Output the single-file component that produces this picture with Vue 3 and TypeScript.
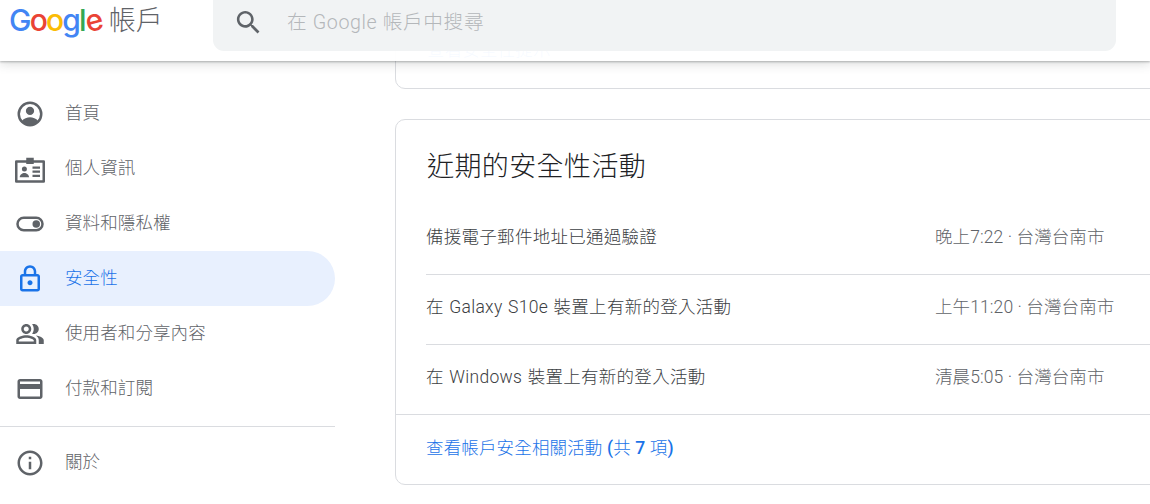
<script setup lang="ts">
interface NavItem {
  label: string
  paths: string[]
  active?: boolean
}

const navItems: NavItem[] = [
  {
    label: '首頁',
    paths: [
      'M12 2a10 10 0 1 0 0 20a10 10 0 1 0 0-20zm0 2a8 8 0 1 1 0 16a8 8 0 1 1 0-16z',
      'M12 6.2a3.3 3.3 0 1 0 0 6.6a3.3 3.3 0 1 0 0-6.6z',
      'M5.5 17.5c1.5-2 4.3-3 6.5-3s5 1 6.5 3A8.5 8.5 0 0 1 12 20.5a8.5 8.5 0 0 1-6.5-3z'
    ]
  },
  {
    label: '個人資訊',
    paths: [
      'M1 5h8V3h6v2h8a1 1 0 0 1 1 1v16a1 1 0 0 1-1 1H1a1 1 0 0 1-1-1V6a1 1 0 0 1 1-1zM2 7v14h20V7h-7v1H9V7z',
      'M7.5 10a2 2 0 1 0 0 4a2 2 0 1 0 0-4z',
      'M3.8 18.5c0-2 2-3.4 3.7-3.4s3.7 1.4 3.7 3.4z',
      'M14 10h6v1.7h-6zM14 13.2h6v1.7h-6zM14 16.6h6v1.7h-6z'
    ]
  },
  {
    label: '資料和隱私權',
    paths: [
      'M7 6h10a6 6 0 0 1 0 12H7a6 6 0 0 1 0-12zm0 2a4 4 0 0 0 0 8h10a4 4 0 0 0 0-8z',
      'M17 9a3 3 0 1 0 0 6a3 3 0 1 0 0-6z'
    ]
  },
  {
    label: '安全性',
    active: true,
    paths: [
      'M18 8h-1V6c0-2.76-2.24-5-5-5S7 3.24 7 6v2H6c-1.1 0-2 .9-2 2v10c0 1.1.9 2 2 2h12c1.1 0 2-.9 2-2V10c0-1.1-.9-2-2-2zM9 6c0-1.66 1.34-3 3-3s3 1.34 3 3v2H9V6zm9 14H6V10h12v10z',
      'M12 17c1.1 0 2-.9 2-2s-.9-2-2-2-2 .9-2 2 .9 2 2 2z'
    ]
  },
  {
    label: '使用者和分享內容',
    paths: [
      'M16.67 13.13C18.04 14.06 19 15.32 19 17v3h4v-3c0-2.18-3.57-3.47-6.33-3.87z',
      'M15 12c2.21 0 4-1.79 4-4s-1.79-4-4-4c-.47 0-.91.1-1.33.24C14.5 5.27 15 6.58 15 8s-.5 2.73-1.33 3.76c.42.14.86.24 1.33.24z',
      'M9 12c2.21 0 4-1.79 4-4s-1.79-4-4-4-4 1.79-4 4 1.79 4 4 4zm0-6c1.1 0 2 .9 2 2s-.9 2-2 2-2-.9-2-2 .9-2 2-2z',
      'M9 13c-2.67 0-8 1.34-8 4v3h16v-3c0-2.66-5.33-4-8-4zm6 5H3v-.99C3.2 16.29 6.3 15 9 15s5.8 1.29 6 2z'
    ]
  },
  {
    label: '付款和訂閱',
    paths: [
      'M20 4H4c-1.11 0-2 .89-2 2v12c0 1.11.89 2 2 2h16c1.11 0 2-.89 2-2V6c0-1.11-.89-2-2-2zm0 14H4v-6h16v6zm0-10H4V6h16v2z'
    ]
  }
]

const aboutPaths = [
  'M11 7h2v2h-2zm0 4h2v6h-2z',
  'M12 2C6.48 2 2 6.48 2 12s4.48 10 10 10 10-4.48 10-10S17.52 2 12 2zm0 18c-4.41 0-8-3.59-8-8s3.59-8 8-8 8 3.59 8 8-3.59 8-8 8z'
]

const activities = [
  { text: '備援電子郵件地址已通過驗證', when: '晚上7:22 · 台灣台南市' },
  { text: '在 Galaxy S10e 裝置上有新的登入活動', when: '上午11:20 · 台灣台南市' },
  { text: '在 Windows 裝置上有新的登入活動', when: '清晨5:05 · 台灣台南市' }
]

const googleLetters = [
  { ch: 'G', color: '#4285f4' },
  { ch: 'o', color: '#ea4335' },
  { ch: 'o', color: '#fbbc05' },
  { ch: 'g', color: '#4285f4' },
  { ch: 'l', color: '#34a853' },
  { ch: 'e', color: '#ea4335' }
]
</script>

<template>
  <div class="page">
    <header class="topbar">
      <div class="brand">
        <span class="logo">
          <span v-for="(l, i) in googleLetters" :key="i" :style="{ color: l.color }">{{ l.ch }}</span>
        </span>
        <span class="product">帳戶</span>
      </div>
      <div class="search">
        <svg class="search-icon" viewBox="0 0 24 24" aria-hidden="true">
          <path d="M15.5 14h-.79l-.28-.27C15.41 12.59 16 11.11 16 9.5 16 5.91 13.09 3 9.5 3S3 5.91 3 9.5 5.91 16 9.5 16c1.61 0 3.09-.59 4.23-1.57l.27.28v.79l5 4.99L20.49 19l-4.99-5zm-6 0C7.01 14 5 11.99 5 9.5S7.01 5 9.5 5 14 7.01 14 9.5 11.99 14 9.5 14z" />
        </svg>
        <span class="placeholder">在 Google 帳戶中搜尋</span>
      </div>
    </header>

    <div class="body">
      <nav class="sidebar">
        <a v-for="item in navItems" :key="item.label" class="nav-item" :class="{ active: item.active }">
          <svg class="nav-icon" viewBox="0 0 24 24" aria-hidden="true">
            <path v-for="(d, i) in item.paths" :key="i" :d="d" fill-rule="evenodd" />
          </svg>
          <span class="nav-label">{{ item.label }}</span>
        </a>
        <div class="nav-divider"></div>
        <a class="nav-item">
          <svg class="nav-icon" viewBox="0 0 24 24" aria-hidden="true">
            <path v-for="(d, i) in aboutPaths" :key="i" :d="d" fill-rule="evenodd" />
          </svg>
          <span class="nav-label">關於</span>
        </a>
      </nav>

      <main class="main">
        <section class="card card-prev">
          <a class="link">查看安全性提示</a>
        </section>

        <section class="card">
          <h2 class="title">近期的安全性活動</h2>
          <div v-for="a in activities" :key="a.text" class="row">
            <span class="row-text">{{ a.text }}</span>
            <span class="row-when">{{ a.when }}</span>
          </div>
          <div class="footer">
            <a class="link">查看帳戶安全相關活動 <b>(</b>共 <b>7</b> 項<b>)</b></a>
          </div>
        </section>
      </main>
    </div>
  </div>
</template>

<style>
html,
body {
  margin: 0;
  background: #fff;
  overflow: hidden;
}
</style>

<style scoped>
.page {
  position: relative;
  width: 1150px;
  height: 504px;
  overflow: hidden;
  background: #fff;
  font-family: Roboto, "Noto Sans CJK TC", sans-serif;
  font-size: 17.5px;
  color: #3c4043;
}

.topbar {
  position: absolute;
  top: 0;
  left: 0;
  right: 0;
  z-index: 2;
  height: 61px;
  display: flex;
  background: rgba(255, 255, 255, 0.96);
  box-shadow: 0 1px 2px rgba(60, 64, 67, 0.35), 0 3px 10px rgba(60, 64, 67, 0.18);
}

.brand {
  width: 213px;
  flex: none;
  display: flex;
  align-items: flex-start;
  box-sizing: border-box;
  padding: 0 0 0 9px;
}

.logo {
  font-family: Inter, sans-serif;
  font-size: 30px;
  font-weight: 500;
  line-height: 40px;
  letter-spacing: -1.8px;
}

.logo span:last-child {
  display: inline-block;
  transform: rotate(-14deg);
}

.product {
  margin-left: 8px;
  font-size: 27px;
  line-height: 42px;
  font-weight: 300;
  color: #5f6368;
}

.search {
  width: 903px;
  height: 51px;
  flex: none;
  display: flex;
  align-items: center;
  box-sizing: border-box;
  padding: 0 0 7px 20px;
  background: #f1f3f4;
  border-radius: 0 0 11px 11px;
}

.search-icon {
  width: 31px;
  height: 31px;
  flex: none;
  fill: #5f6368;
}

.placeholder {
  margin-left: 23px;
  margin-bottom: 3px;
  font-size: 19.7px;
  letter-spacing: 0.6px;
  font-weight: 300;
  color: #b4b7ba;
}

.body {
  display: flex;
  height: 100%;
}

.sidebar {
  width: 335px;
  flex: none;
  padding-top: 86px;
  box-sizing: border-box;
}

.nav-item {
  height: 55px;
  display: flex;
  align-items: center;
  gap: 20px;
  box-sizing: border-box;
  padding-left: 15px;
  border-radius: 0 27.5px 27.5px 0;
  color: #5f6368;
  font-weight: 300;
  letter-spacing: 0.1px;
}

.nav-label {
  margin-bottom: 5px;
}

.nav-item.active {
  background: #e8f0fe;
  color: #1a73e8;
}

.nav-icon {
  width: 30px;
  height: 30px;
  flex: none;
  fill: #5f6368;
}

.nav-item.active .nav-icon {
  fill: #1a73e8;
}

.nav-divider {
  height: 1px;
  margin: 10px 0 8px;
  background: #dadce0;
}

.main {
  margin-left: 60px;
  width: 800px;
  flex: none;
  display: flex;
  flex-direction: column;
  gap: 30px;
}

.card {
  flex: none;
  border: 1px solid #dadce0;
  border-radius: 10px;
  box-sizing: border-box;
}

.card-prev {
  height: 109px;
  margin-top: -20px;
  display: flex;
  align-items: flex-end;
  padding: 0 0 27px 31px;
}

.title {
  margin: 0;
  height: 85px;
  box-sizing: border-box;
  padding: 27px 0 0 31px;
  font-size: 27px;
  line-height: 40px;
  font-weight: 300;
  letter-spacing: 0.4px;
  color: #202124;
}

.row {
  height: 70px;
  margin-left: 30px;
  display: flex;
  align-items: center;
  box-sizing: border-box;
  padding: 0 0 8px 0;
  border-bottom: 1px solid #dadce0;
}

.row:nth-of-type(3) {
  margin-left: 0;
  padding-left: 30px;
}

.row-text {
  width: 509px;
  flex: none;
  font-weight: 300;
  letter-spacing: 0.28px;
  word-spacing: 1px;
}

.row-when {
  flex: none;
  font-weight: 300;
  letter-spacing: 0.1px;
  color: #5f6368;
}

.footer {
  height: 69px;
  display: flex;
  align-items: center;
  box-sizing: border-box;
  padding: 0 0 6px 30px;
}

.link {
  color: #1a73e8;
  font-size: 17.5px;
  font-weight: 300;
  letter-spacing: 0.15px;
}

.link b {
  font-weight: 500;
}
</style>
